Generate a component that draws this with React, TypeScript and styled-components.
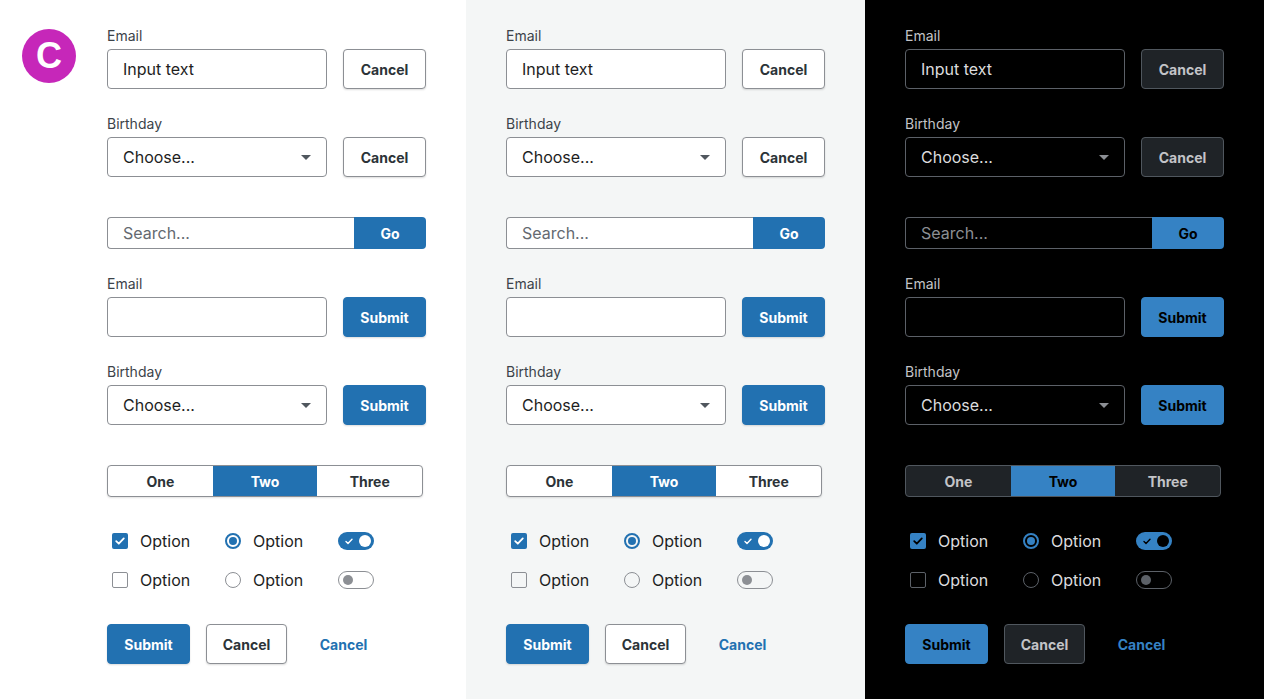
import React from "react";
import styled, { createGlobalStyle, ThemeProvider } from "styled-components";

type Theme = {
  bg: string;
  text: string;
  label: string;
  inputBg: string;
  border: string;
  placeholder: string;
  primary: string;
  primaryText: string;
  secondaryBg: string;
  secondaryText: string;
  secondaryBorder: string;
  arrow: string;
  knob: string;
};

const light: Theme = {
  bg: "#ffffff",
  text: "#1e1e1e",
  label: "#3c434a",
  inputBg: "#ffffff",
  border: "#8c8f94",
  placeholder: "#646970",
  primary: "#2271b1",
  primaryText: "#ffffff",
  secondaryBg: "#ffffff",
  secondaryText: "#2c3338",
  secondaryBorder: "#8c8f94",
  arrow: "#50575e",
  knob: "#ffffff",
};

const gray: Theme = { ...light, bg: "#f4f6f6" };

const dark: Theme = {
  bg: "#000000",
  text: "#dcdcde",
  label: "#c3c4c7",
  inputBg: "#000000",
  border: "#5c6168",
  placeholder: "#8c8f94",
  primary: "#3582c4",
  primaryText: "#000000",
  secondaryBg: "#1f2327",
  secondaryText: "#c3c4c7",
  secondaryBorder: "#50575e",
  arrow: "#8c8f94",
  knob: "#000000",
};

const GlobalStyle = createGlobalStyle`
  html, body {
    margin: 0;
    padding: 0;
    background: #ffffff;
  }
  body {
    font-family: Inter, "Noto Sans", "Liberation Sans", sans-serif;
    -webkit-font-smoothing: antialiased;
  }
  * { box-sizing: border-box; }
`;

const Page = styled.div`
  display: flex;
  width: 1264px;
  height: 699px;
  overflow: hidden;
`;

const FirstPanel = styled.div`
  display: flex;
  width: 466px;
  background: #ffffff;
`;

const LogoColumn = styled.div`
  position: relative;
  z-index: 1;
  width: 67px;
  flex-shrink: 0;
  padding: 29px 0 0 22px;
`;

const Logo = styled.div`
  width: 54px;
  height: 54px;
  border-radius: 50%;
  background: #c627b9;
  color: #ffffff;
  display: flex;
  align-items: center;
  justify-content: center;
  font-family: "Liberation Sans", Arial, sans-serif;
  font-weight: 700;
  font-size: 36px;
  line-height: 1;
  padding-bottom: 1px;
`;

const Panel = styled.div`
  width: 399px;
  height: 699px;
  padding: 28px 40px 0;
  background: ${(p) => p.theme.bg};
  display: flex;
  flex-direction: column;
`;

const Field = styled.div<{ $top?: number }>`
  margin-top: ${(p) => p.$top ?? 0}px;
`;

const Label = styled.div`
  font-size: 14px;
  line-height: 16px;
  color: ${(p) => p.theme.label};
  margin-bottom: 5px;
`;

const Row = styled.div`
  display: flex;
  gap: 16px;
`;

const TextBox = styled.div`
  position: relative;
  width: 220px;
  height: 40px;
  border: 1px solid ${(p) => p.theme.border};
  border-radius: 4px;
  background: ${(p) => p.theme.inputBg};
  color: ${(p) => p.theme.text};
  font-size: 16px;
  padding: 0 15px;
  display: flex;
  align-items: center;
`;

const Arrow = styled.span`
  position: absolute;
  right: 15px;
  top: 17px;
  width: 0;
  height: 0;
  border-left: 5px solid transparent;
  border-right: 5px solid transparent;
  border-top: 5px solid ${(p) => p.theme.arrow};
`;

const Button = styled.button<{ $variant: "primary" | "secondary" | "link"; $w?: number }>`
  width: ${(p) => p.$w ?? 83}px;
  height: 40px;
  border-radius: 4px;
  font-family: inherit;
  font-size: 14px;
  font-weight: 700;
  padding: 0;
  cursor: pointer;
  border: 1px solid
    ${(p) =>
      p.$variant === "primary"
        ? p.theme.primary
        : p.$variant === "secondary"
        ? p.theme.secondaryBorder
        : "transparent"};
  background: ${(p) =>
    p.$variant === "primary"
      ? p.theme.primary
      : p.$variant === "secondary"
      ? p.theme.secondaryBg
      : "transparent"};
  color: ${(p) =>
    p.$variant === "primary"
      ? p.theme.primaryText
      : p.$variant === "secondary"
      ? p.theme.secondaryText
      : p.theme.primary};
  box-shadow: ${(p) => (p.$variant === "link" ? "none" : "0 1px 2px rgba(0,0,0,0.14)")};
`;

const SearchGroup = styled.div`
  display: flex;
  height: 32px;
  margin-top: 40px;
  width: 319px;
`;

const SearchBox = styled.div`
  flex: 1;
  border: 1px solid ${(p) => p.theme.border};
  border-right: none;
  border-radius: 4px 0 0 4px;
  background: ${(p) => p.theme.inputBg};
  color: ${(p) => p.theme.placeholder};
  font-size: 16px;
  padding: 0 15px;
  display: flex;
  align-items: center;
`;

const GoButton = styled.button`
  width: 72px;
  height: 32px;
  border: none;
  border-radius: 0 4px 4px 0;
  background: ${(p) => p.theme.primary};
  color: ${(p) => p.theme.primaryText};
  font-family: inherit;
  font-size: 14px;
  font-weight: 700;
  padding: 0;
`;

const Segmented = styled.div`
  margin-top: 40px;
  width: 316px;
  height: 32px;
  display: flex;
  border: 1px solid ${(p) => p.theme.secondaryBorder};
  border-radius: 4px;
  overflow: hidden;
  background: ${(p) => p.theme.secondaryBg};
  box-shadow: 0 1px 2px rgba(0, 0, 0, 0.12);
`;

const Segment = styled.div<{ $active?: boolean }>`
  flex: 1;
  display: flex;
  align-items: center;
  justify-content: center;
  font-size: 14px;
  font-weight: 700;
  background: ${(p) => (p.$active ? p.theme.primary : "transparent")};
  color: ${(p) => (p.$active ? p.theme.primaryText : p.theme.secondaryText)};
`;

const Options = styled.div`
  margin-top: 32px;
  display: grid;
  grid-template-columns: 113px 118px auto;
  row-gap: 15px;
`;

const Option = styled.div`
  display: flex;
  align-items: center;
  height: 24px;
  gap: 12px;
  font-size: 16px;
  color: ${(p) => p.theme.text};
`;

const CheckBox = styled.span<{ $on?: boolean }>`
  margin-left: 5px;
  width: 16px;
  height: 16px;
  border-radius: 2px;
  border: ${(p) => (p.$on ? "none" : `1.5px solid ${p.theme.border}`)};
  background: ${(p) => (p.$on ? p.theme.primary : "transparent")};
  display: flex;
  align-items: center;
  justify-content: center;
`;

const Radio = styled.span<{ $on?: boolean }>`
  margin-left: 5px;
  width: 16px;
  height: 16px;
  border-radius: 50%;
  border: ${(p) => (p.$on ? `2px solid ${p.theme.primary}` : `1.5px solid ${p.theme.border}`)};
  display: flex;
  align-items: center;
  justify-content: center;
  &::after {
    content: "";
    display: ${(p) => (p.$on ? "block" : "none")};
    width: 8px;
    height: 8px;
    border-radius: 50%;
    background: ${(p) => p.theme.primary};
  }
`;

const Toggle = styled.span<{ $on?: boolean }>`
  position: relative;
  width: 36px;
  height: 18px;
  border-radius: 9px;
  background: ${(p) => (p.$on ? p.theme.primary : "transparent")};
  border: ${(p) => (p.$on ? "none" : `1.5px solid ${p.theme.border}`)};
`;

const Knob = styled.span<{ $on?: boolean }>`
  position: absolute;
  top: 50%;
  transform: translateY(-50%);
  width: ${(p) => (p.$on ? 12 : 10)}px;
  height: ${(p) => (p.$on ? 12 : 10)}px;
  border-radius: 50%;
  left: ${(p) => (p.$on ? "21px" : "4px")};
  background: ${(p) => (p.$on ? p.theme.knob : p.theme.border)};
`;

const ToggleTick = styled.svg`
  position: absolute;
  left: 7px;
  top: 6px;
`;

const Actions = styled.div`
  margin-top: 32px;
  display: flex;
  gap: 16px;
`;

const Tick = ({ color, size = 12 }: { color: string; size?: number }) => (
  <svg width={size} height={size} viewBox="0 0 12 12" fill="none">
    <path d="M2.2 6.2 4.8 8.7 9.8 3.4" stroke={color} strokeWidth="1.8" strokeLinecap="round" strokeLinejoin="round" />
  </svg>
);

const Form = ({ theme }: { theme: Theme }) => (
  <ThemeProvider theme={theme}>
    <Panel>
      <Field>
        <Label>Email</Label>
        <Row>
          <TextBox>Input text</TextBox>
          <Button $variant="secondary">Cancel</Button>
        </Row>
      </Field>
      <Field $top={27}>
        <Label>Birthday</Label>
        <Row>
          <TextBox>
            Choose...
            <Arrow />
          </TextBox>
          <Button $variant="secondary">Cancel</Button>
        </Row>
      </Field>

      <SearchGroup>
        <SearchBox>Search...</SearchBox>
        <GoButton>Go</GoButton>
      </SearchGroup>

      <Field $top={27}>
        <Label>Email</Label>
        <Row>
          <TextBox />
          <Button $variant="primary">Submit</Button>
        </Row>
      </Field>
      <Field $top={27}>
        <Label>Birthday</Label>
        <Row>
          <TextBox>
            Choose...
            <Arrow />
          </TextBox>
          <Button $variant="primary">Submit</Button>
        </Row>
      </Field>

      <Segmented>
        <Segment>One</Segment>
        <Segment $active>Two</Segment>
        <Segment>Three</Segment>
      </Segmented>

      <Options>
        <Option>
          <CheckBox $on>
            <Tick color={theme.primaryText} />
          </CheckBox>
          Option
        </Option>
        <Option>
          <Radio $on />
          Option
        </Option>
        <Option>
          <Toggle $on>
            <ToggleTick width="8" height="7" viewBox="0 0 8 7" fill="none">
              <path d="M1 3.6 3 5.5 7 1.3" stroke={theme.knob} strokeWidth="1.4" strokeLinecap="round" strokeLinejoin="round" />
            </ToggleTick>
            <Knob $on />
          </Toggle>
        </Option>
        <Option>
          <CheckBox />
          Option
        </Option>
        <Option>
          <Radio />
          Option
        </Option>
        <Option>
          <Toggle>
            <Knob />
          </Toggle>
        </Option>
      </Options>

      <Actions>
        <Button $variant="primary">Submit</Button>
        <Button $variant="secondary" $w={81}>Cancel</Button>
        <Button $variant="link" $w={81}>Cancel</Button>
      </Actions>
    </Panel>
  </ThemeProvider>
);

export default function App() {
  return (
    <>
      <GlobalStyle />
      <Page>
        <FirstPanel>
          <LogoColumn>
            <Logo>C</Logo>
          </LogoColumn>
          <Form theme={light} />
        </FirstPanel>
        <Form theme={gray} />
        <Form theme={dark} />
      </Page>
    </>
  );
}
